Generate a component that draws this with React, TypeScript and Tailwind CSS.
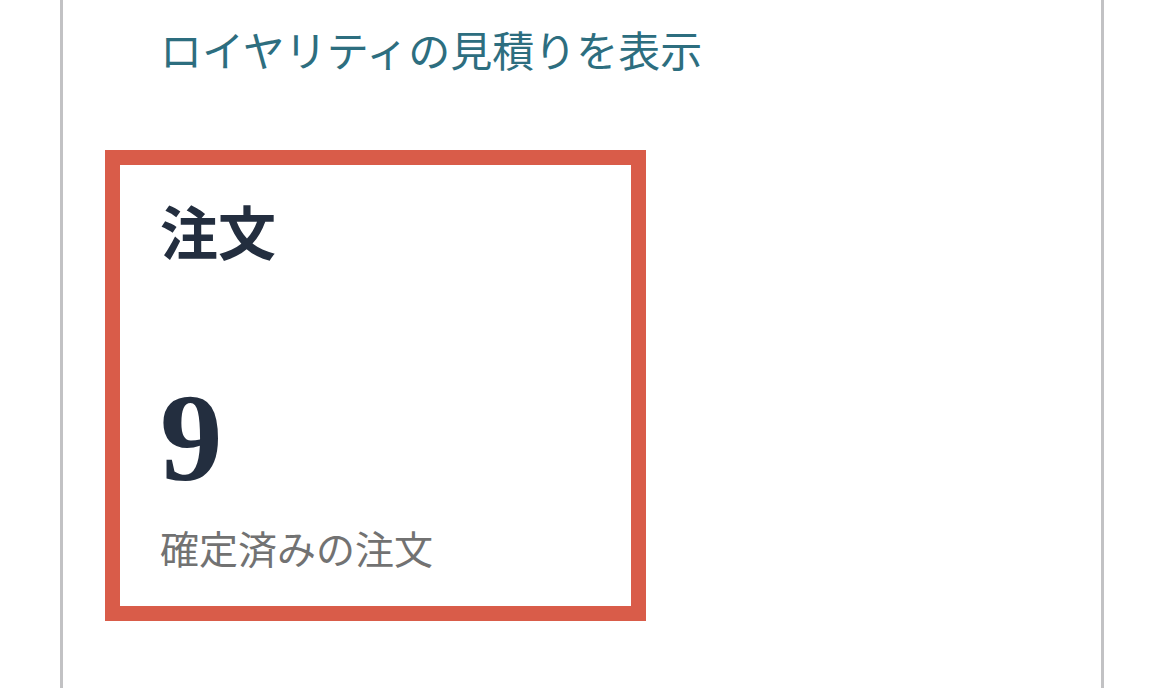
import React from 'react';

function StatCard({ title, value, caption }: { title: string; value: string; caption: string }) {
  return (
    <div className="ml-[42px] mt-[80px] flex h-[471px] w-[541px] flex-col border-[15px] border-[#d95c49] bg-white pl-[40px] pt-[36px]">
      <h3 className="font-['Noto_Sans_CJK_JP',sans-serif] text-[58px] leading-none font-bold text-[#232e3f]">
        {title}
      </h3>
      <div className="mt-[117px] font-['Liberation_Serif',serif] text-[125px] leading-none font-bold text-[#232e3f]">
        {value}
      </div>
      <p className="mt-[27px] font-['Noto_Sans_CJK_JP',sans-serif] text-[39px] leading-none text-[#727272]">
        {caption}
      </p>
    </div>
  );
}

export default function App() {
  return (
    <div className="h-[688px] w-[1170px] overflow-hidden bg-white">
      <div className="ml-[60px] flex h-full w-[1044px] flex-col border-x-[3px] border-[#c2c2c4] pt-[28px]">
        <a
          href="#"
          className="ml-[97px] font-['Noto_Sans_CJK_JP',sans-serif] text-[42px] leading-none text-[#2d6e7f]"
        >
          ロイヤリティの見積りを表示
        </a>
        <StatCard title="注文" value="9" caption="確定済みの注文" />
      </div>
    </div>
  );
}
